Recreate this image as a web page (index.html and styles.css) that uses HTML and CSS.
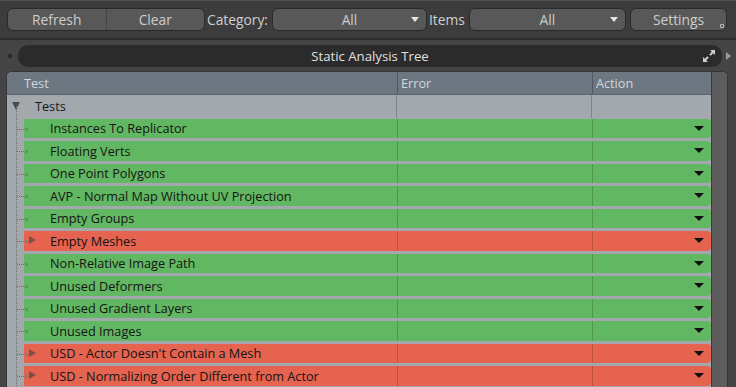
FILE: index.html
```html
<!DOCTYPE html>
<html lang="en">
<head>
    <meta charset="UTF-8">
    <title>Static Analysis</title>
    <link rel="stylesheet" href="styles.css">
</head>
<body>
    <div class="toolbar">
        <div class="seg">
            <div class="btn">Refresh</div>
            <div class="btn">Clear</div>
        </div>
        <span class="label">Category:</span>
        <div class="drop drop-cat">All<span class="arrow"></span></div>
        <span class="label">Items</span>
        <div class="drop drop-items">All<span class="arrow"></span></div>
        <div class="settings">Settings<span class="corner"></span></div>
    </div>

    <div class="panel-head">
        <span class="dot"></span>
        <div class="title-bar">
            <span class="title">Static Analysis Tree</span>
            <svg class="expand" width="14" height="14" viewBox="0 0 14 14">
                <path d="M8 1h5v5l-1.8-1.8-2.6 2.6-1.4-1.4 2.6-2.6z" fill="#cfcfcf"/>
                <path d="M6 13H1V8l1.8 1.8 2.6-2.6 1.4 1.4-2.6 2.6z" fill="#cfcfcf"/>
            </svg>
        </div>
        <span class="side-arrow"></span>
    </div>

    <div class="tree">
        <div class="grid">
            <div class="head">
                <div class="col col-test">Test</div>
                <div class="col col-error">Error</div>
                <div class="col col-action">Action</div>
            </div>
            <div class="root">
                <span class="root-arrow"></span>
                <span class="root-name">Tests</span>
                <span class="root-err"></span>
                <span class="root-act"></span>
            </div>
            <div class="rows" id="rows"></div>
        </div>
        <div class="scroll"></div>
    </div>

    <script>
        const tests = [
            ['Instances To Replicator', 'ok'],
            ['Floating Verts', 'ok'],
            ['One Point Polygons', 'ok'],
            ['AVP - Normal Map Without UV Projection', 'ok'],
            ['Empty Groups', 'ok'],
            ['Empty Meshes', 'fail'],
            ['Non-Relative Image Path', 'ok'],
            ['Unused Deformers', 'ok'],
            ['Unused Gradient Layers', 'ok'],
            ['Unused Images', 'ok'],
            ["USD - Actor Doesn't Contain a Mesh", 'fail'],
            ['USD - Normalizing Order Different from Actor', 'fail']
        ];
        const rows = document.getElementById('rows');
        rows.innerHTML = tests.map(([name, state]) => `
            <div class="row">
                <div class="band ${state}">
                    <span class="cell name">${state === 'fail' ? '<span class="tri"></span>' : ''}${name}</span>
                    <span class="cell err"></span>
                    <span class="cell act"><span class="act-arrow"></span></span>
                </div>
            </div>
        `).join('');
    </script>
</body>
</html>
```

FILE: styles.css
```css
body {
    margin: 0;
    width: 736px;
    height: 387px;
    overflow: hidden;
    background-color: #444444;
    font-family: 'Open Sans', 'Noto Sans', sans-serif;
    font-size: 12.7px;
    color: #c9c9c9;
}
.toolbar {
    height: 40px;
    display: flex;
    align-items: center;
    padding: 0 9px 1px 7px;
    background-color: #3c3c3c;
    border-bottom: 2px solid #2c2c2c;
    box-sizing: border-box;
    border-top: 1px solid #505050;
}
.seg {
    display: flex;
    width: 198px;
    height: 23px;
    border: 1px solid #2a2a2a;
    border-radius: 6px;
    background-color: #585858;
    overflow: hidden;
    box-sizing: border-box;
}
.btn {
    flex: 1;
    display: flex;
    align-items: center;
    justify-content: center;
    color: #cdcdcd;
    font-size: 13.8px;
}
.btn + .btn {
    border-left: 1px solid #454545;
}
.label {
    font-size: 13.8px;
    color: #cfcfcf;
    margin: 0 4px 0 2px;
}
.drop {
    position: relative;
    height: 23px;
    border: 1px solid #2a2a2a;
    border-radius: 6px;
    background-color: #585858;
    box-sizing: border-box;
    display: flex;
    align-items: center;
    justify-content: center;
    color: #cdcdcd;
    font-size: 13.8px;
}
.drop-cat {
    width: 155px;
}
.drop-items {
    width: 157px;
}
.arrow {
    position: absolute;
    right: 7px;
    top: 8px;
    border-left: 4px solid transparent;
    border-right: 4px solid transparent;
    border-top: 5px solid #e6e6e6;
}
.settings {
    position: relative;
    margin-left: auto;
    width: 97px;
    height: 23px;
    border: 1px solid #2a2a2a;
    border-radius: 6px;
    background-color: #585858;
    box-sizing: border-box;
    display: flex;
    align-items: center;
    justify-content: center;
    color: #cdcdcd;
    font-size: 13.8px;
}
.corner {
    position: absolute;
    right: 2px;
    bottom: 2px;
    width: 2px;
    height: 2px;
    border: 1px solid #bbbbbb;
    border-radius: 1px;
}
.panel-head {
    height: 31px;
    display: flex;
    align-items: center;
    padding: 0 5px 0 6px;
    background-color: #444444;
}
.dot {
    width: 6px;
    height: 6px;
    border-radius: 50%;
    background-color: #2e2e2e;
    border: 1px solid #555555;
    margin-right: 4px;
}
.title-bar {
    flex: 1;
    height: 22px;
    background-color: #2b2b2b;
    border-radius: 10px;
    display: flex;
    align-items: center;
    justify-content: center;
    position: relative;
}
.title {
    color: #e0e0e0;
    font-size: 13.2px;
}
.expand {
    position: absolute;
    right: 6px;
    top: 4px;
}
.side-arrow {
    margin-left: 4px;
    border-top: 4px solid transparent;
    border-bottom: 4px solid transparent;
    border-left: 5px solid #9a9a9a;
}
.tree {
    display: flex;
    margin: 0 8px 0 6px;
    height: 320px;
    border-radius: 6px 6px 0 0;
    overflow: hidden;
    background-color: #a3a8ad;
    border: 1px solid #353535;
    border-bottom: none;
}
.grid {
    flex: 1;
    display: flex;
    flex-direction: column;
}
.head {
    display: flex;
    height: 22px;
    background-color: #6c7782;
    border-bottom: 1px solid #5a636c;
}
.col {
    display: flex;
    align-items: center;
    color: #d2d7dc;
    padding-left: 3px;
}
.col-test {
    width: 390px;
    padding-left: 17px;
    box-sizing: border-box;
}
.col-error {
    width: 195px;
    border-left: 1px solid #4f5760;
    box-sizing: border-box;
}
.col-action {
    flex: 1;
    border-left: 1px solid #4f5760;
}
.root {
    display: flex;
    height: 22.5px;
    align-items: center;
    position: relative;
}
.root-arrow {
    width: 0;
    margin-left: 5px;
    border-left: 4px solid transparent;
    border-right: 4px solid transparent;
    border-top: 8px solid #4b4b4b;
}
.root-name {
    width: 376px;
    padding-left: 15px;
    color: #161616;
    box-sizing: border-box;
    align-self: stretch;
    display: flex;
    align-items: center;
}
.root-err {
    width: 195px;
    align-self: stretch;
    border-left: 1px solid #7f858b;
    box-sizing: border-box;
}
.root-act {
    flex: 1;
    align-self: stretch;
    border-left: 1px solid #7f858b;
}
.rows {
    position: relative;
}
.rows::before {
    content: '';
    position: absolute;
    left: 9px;
    top: -12px;
    bottom: 0;
    border-left: 1px dotted #6a6a6a;
}
.row {
    position: relative;
    height: 22.5px;
    padding: 1px 0 0 17px;
    box-sizing: border-box;
}
.row::before {
    content: '';
    position: absolute;
    left: 10px;
    top: 11px;
    width: 7px;
    border-top: 1px dotted #6a6a6a;
}
.row::after {
    content: '';
    position: absolute;
    left: 18px;
    top: 10px;
    width: 3px;
    height: 3px;
    background-color: #6f8a6f;
}
.band {
    display: flex;
    height: 19.5px;
    border-radius: 0 4px 4px 0;
}
.band.ok {
    background-color: #62b762;
}
.band.fail {
    background-color: #e5634f;
}
.cell {
    display: flex;
    align-items: center;
    box-sizing: border-box;
}
.name {
    width: 373px;
    padding-left: 26px;
    color: #141414;
    position: relative;
}
.tri {
    position: absolute;
    left: 5px;
    top: 5px;
    border-top: 4px solid transparent;
    border-bottom: 4px solid transparent;
    border-left: 7px solid #7c5046;
}
.err {
    width: 195px;
    border-left: 1px solid rgba(0, 0, 0, 0.18);
}
.act {
    flex: 1;
    border-left: 1px solid rgba(0, 0, 0, 0.18);
    justify-content: flex-end;
    padding-right: 7px;
}
.act-arrow {
    border-left: 5px solid transparent;
    border-right: 5px solid transparent;
    border-top: 5px solid #111111;
}
.scroll {
    width: 15px;
    background-color: #5d5d5d;
    border-left: 1px solid #3a3a3a;
}
```
